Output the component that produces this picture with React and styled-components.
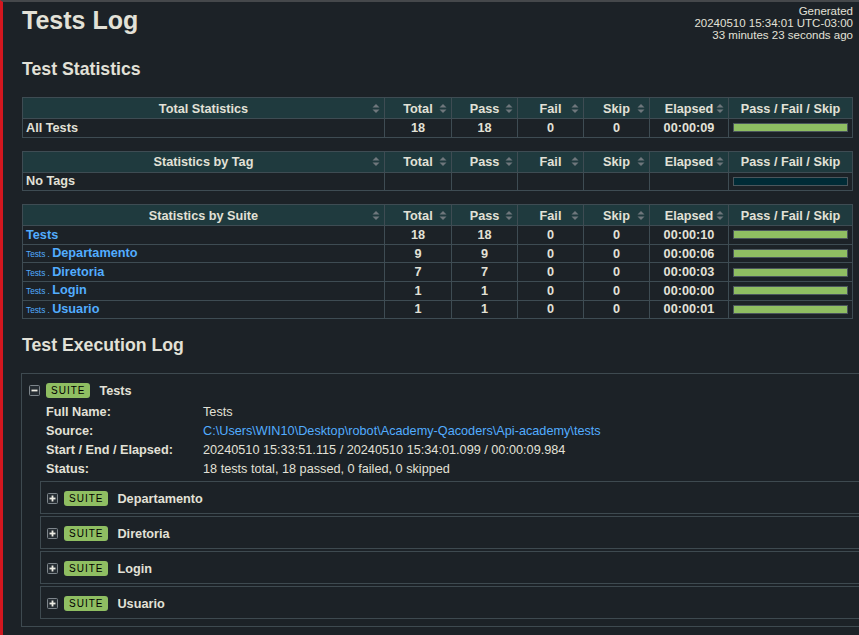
import styled, { createGlobalStyle } from "styled-components";

const GlobalStyle = createGlobalStyle`
  html, body {
    margin: 0;
    padding: 0;
    background: #1c2227;
    overflow: hidden;
  }
  body {
    font-family: "Liberation Sans", Arial, Helvetica, sans-serif;
    color: #e2e1d7;
  }
`;

const stats = {
  total: [{ name: "All Tests", total: 18, pass: 18, fail: 0, skip: 0, elapsed: "00:00:09", pct: 100 }],
  tag: [{ name: "No Tags", empty: true }],
  suite: [
    { parent: null, name: "Tests", total: 18, pass: 18, fail: 0, skip: 0, elapsed: "00:00:10", pct: 100 },
    { parent: "Tests", name: "Departamento", total: 9, pass: 9, fail: 0, skip: 0, elapsed: "00:00:06", pct: 100 },
    { parent: "Tests", name: "Diretoria", total: 7, pass: 7, fail: 0, skip: 0, elapsed: "00:00:03", pct: 100 },
    { parent: "Tests", name: "Login", total: 1, pass: 1, fail: 0, skip: 0, elapsed: "00:00:00", pct: 100 },
    { parent: "Tests", name: "Usuario", total: 1, pass: 1, fail: 0, skip: 0, elapsed: "00:00:01", pct: 100 },
  ],
};

const children = ["Departamento", "Diretoria", "Login", "Usuario"];

export default function App() {
  return (
    <Page>
      <GlobalStyle />
      <Header>
        <Title>Tests Log</Title>
        <Generated>
          Generated<br />
          20240510 15:34:01 UTC-03:00<br />
          33 minutes 23 seconds ago
        </Generated>
      </Header>

      <SectionTitle>Test Statistics</SectionTitle>
      <StatTable title="Total Statistics" rows={stats.total} />
      <StatTable title="Statistics by Tag" rows={stats.tag} />
      <StatTable title="Statistics by Suite" rows={stats.suite} links />

      <SectionTitle $exec>Test Execution Log</SectionTitle>
      <SuiteBox>
        <SuiteHead>
          <Toggle open />
          <Badge>SUITE</Badge>
          <SuiteName>Tests</SuiteName>
        </SuiteHead>
        <Meta>
          <tbody>
            <tr><MetaLabel>Full Name:</MetaLabel><MetaValue>Tests</MetaValue></tr>
            <tr>
              <MetaLabel>Source:</MetaLabel>
              <MetaValue><Link href="#">C:\Users\WIN10\Desktop\robot\Academy-Qacoders\Api-academy\tests</Link></MetaValue>
            </tr>
            <tr><MetaLabel>Start / End / Elapsed:</MetaLabel><MetaValue>20240510 15:33:51.115 / 20240510 15:34:01.099 / 00:00:09.984</MetaValue></tr>
            <tr><MetaLabel>Status:</MetaLabel><MetaValue>18 tests total, 18 passed, 0 failed, 0 skipped</MetaValue></tr>
          </tbody>
        </Meta>
        <Children>
          {children.map((c) => (
            <ChildBox key={c}>
              <SuiteHead $child>
                <Toggle />
                <Badge>SUITE</Badge>
                <SuiteName>{c}</SuiteName>
              </SuiteHead>
            </ChildBox>
          ))}
        </Children>
      </SuiteBox>
    </Page>
  );
}

function StatTable({ title, rows, links }) {
  const cols = ["Total", "Pass", "Fail", "Skip", "Elapsed"];
  return (
    <Table>
      <colgroup>
        <col style={{ width: 362 }} />
        <col style={{ width: 67 }} />
        <col style={{ width: 66 }} />
        <col style={{ width: 66 }} />
        <col style={{ width: 66 }} />
        <col style={{ width: 79 }} />
        <col style={{ width: 124 }} />
      </colgroup>
      <thead>
        <tr>
          <Th><SortCell>{title}</SortCell></Th>
          {cols.map((c) => (
            <Th key={c}><SortCell>{c}</SortCell></Th>
          ))}
          <Th><HeadText>Pass / Fail / Skip</HeadText></Th>
        </tr>
      </thead>
      <tbody>
        {rows.map((r) => (
          <tr key={r.name}>
            <NameTd>
              {links ? (
                <SuiteLink href="#">
                  {r.parent && <ParentName>{r.parent} . </ParentName>}
                  {r.name}
                </SuiteLink>
              ) : (
                r.name
              )}
            </NameTd>
            <Td>{r.total}</Td>
            <Td>{r.pass}</Td>
            <Td>{r.fail}</Td>
            <Td>{r.skip}</Td>
            <Td>{r.elapsed}</Td>
            <GraphTd>
              <Bar $empty={r.empty}>
                {!r.empty && <BarPass style={{ width: `${r.pct}%` }} />}
              </Bar>
            </GraphTd>
          </tr>
        ))}
      </tbody>
    </Table>
  );
}

function SortCell({ children }) {
  return (
    <SortWrap>
      <SortSpacer />
      <HeadText>{children}</HeadText>
      <SortIcon />
    </SortWrap>
  );
}

const SortIcon = () => (
  <SortSvg width="8" height="9" viewBox="0 0 8 9">
    <path d="M4 0 L7.5 3.5 H0.5 Z" fill="#6f777c" />
    <path d="M4 9 L7.5 5.5 H0.5 Z" fill="#6f777c" />
  </SortSvg>
);

const Toggle = ({ open }) => (
  <ToggleSvg width="11" height="11" viewBox="0 0 11 11">
    <rect x="0.5" y="0.5" width="10" height="10" rx="1" fill="#262d33" stroke="#7d858b" />
    <path d="M2.5 5.5 H8.5" stroke="#ecebe3" strokeWidth="1.8" />
    {!open && <path d="M5.5 2.5 V8.5" stroke="#ecebe3" strokeWidth="1.8" />}
  </ToggleSvg>
);

// styled components
const Page = styled.div`
  min-height: 100vh;
  box-sizing: border-box;
  border-top: 2px solid #45484b;
  border-left: 3px solid #d3171f;
  padding: 0 6px 0 19px;
`;

const Header = styled.header`
  display: flex;
  justify-content: space-between;
  align-items: flex-start;
`;

const Title = styled.h1`
  margin: 3px 0 0;
  font-size: 25px;
  line-height: 30px;
  font-weight: bold;
`;

const Generated = styled.div`
  margin-top: 3px;
  text-align: right;
  font-size: 11.5px;
  line-height: 12px;
`;

const SectionTitle = styled.h2`
  margin: ${(p) => (p.$exec ? "15px 0 17px" : "17px 0 17px")};
  font-size: 17.7px;
  line-height: 22px;
  font-weight: bold;
`;

const Table = styled.table`
  width: 830px;
  table-layout: fixed;
  border-collapse: collapse;
  margin-bottom: 13px;
  font-size: 12.7px;
  font-weight: bold;
`;

const Th = styled.th`
  height: 19px;
  padding: 1px 0 0;
  background: #1f3a3e;
  border: 1px solid #3e4c53;
  font-weight: bold;
`;

const SortWrap = styled.div`
  display: flex;
  align-items: center;
  padding: 0 4px;
`;

const SortSpacer = styled.span`
  width: 8px;
  flex: none;
`;

const HeadText = styled.span`
  flex: 1;
  text-align: center;
  white-space: nowrap;
`;

const SortSvg = styled.svg`
  flex: none;
  display: block;
  margin-top: -1px;
`;

const Td = styled.td`
  height: 16.6px;
  padding: 1px 5px 0;
  border: 1px solid #3e4c53;
  text-align: center;
  line-height: 15px;
`;

const NameTd = styled(Td)`
  text-align: left;
  padding-left: 3px;
`;

const GraphTd = styled(Td)`
  padding: 0 4px;
  height: 17.6px;
`;

const Bar = styled.div`
  height: 7px;
  border: 1px solid #4b565c;
  background: ${(p) => (p.$empty ? "#002b36" : "#1c2227")};
  display: flex;
`;

const BarPass = styled.div`
  background: #8fbe62;
  height: 100%;
`;

const SuiteLink = styled.a`
  color: #52adff;
  text-decoration: none;
`;

const ParentName = styled.span`
  font-size: 0.65em;
  font-weight: normal;
`;

const SuiteBox = styled.div`
  width: 900px;
  margin-left: -1px;
  border: 1px solid #3e4a50;
  padding-bottom: 7px;
`;

const SuiteHead = styled.div`
  display: flex;
  align-items: center;
  height: 15px;
  padding: ${(p) => (p.$child ? "9px 0 7px 6px" : "9px 0 0 7px")};
`;

const ToggleSvg = styled.svg`
  display: block;
  flex: none;
`;

const Badge = styled.span`
  margin-left: 6px;
  padding: 0 5px;
  height: 15px;
  line-height: 15px;
  border-radius: 3px;
  background: #8fbe62;
  color: #000;
  font-size: 10px;
  letter-spacing: 1px;
`;

const SuiteName = styled.span`
  margin-left: 9px;
  font-size: 12.7px;
  font-weight: bold;
`;

const Meta = styled.table`
  margin: 4px 0 0 24px;
  border-collapse: collapse;
  font-size: 12.7px;
`;

const MetaLabel = styled.th`
  width: 157px;
  height: 19px;
  padding: 0;
  text-align: left;
  font-weight: bold;
`;

const MetaValue = styled.td`
  padding: 0;
`;

const Link = styled.a`
  color: #52adff;
  text-decoration: none;
`;

const Children = styled.div`
  margin-top: 3px;
  padding-left: 18px;
  display: flex;
  flex-direction: column;
  gap: 2px;
`;

const ChildBox = styled.div`
  border: 1px solid #3e4a50;
`;
